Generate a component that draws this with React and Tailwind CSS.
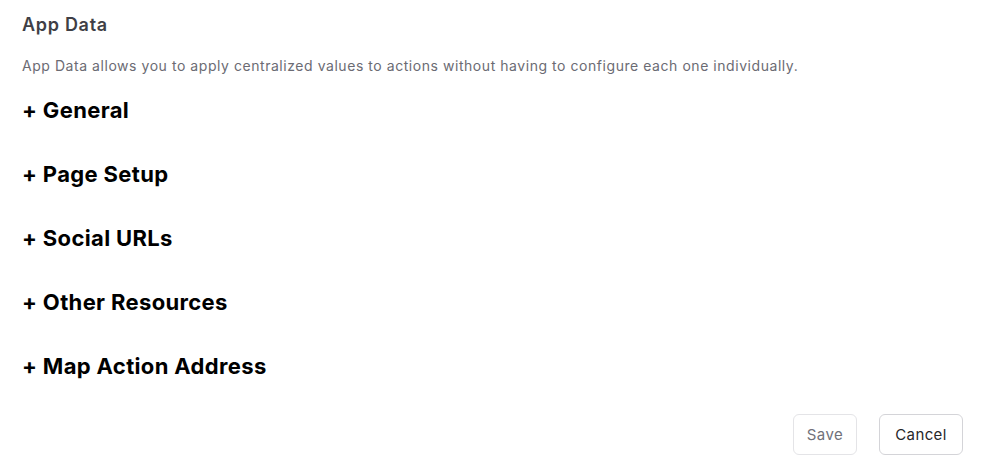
export default function App() {
  const sections = ["General", "Page Setup", "Social URLs", "Other Resources", "Map Action Address"];
  return (
    <div className="w-[987px] h-[461px] bg-white px-[22px] pt-[13px] flex flex-col" style={{ fontFamily: "Inter, 'Noto Sans', sans-serif" }}>
      <h2 className="text-[18px] leading-[24px] font-semibold tracking-[0.7px] text-[#3f3f46]">App Data</h2>
      <p className="mt-[19px] text-[14px] leading-[20px] tracking-[0.55px] text-[#6b6b73]">App Data allows you to apply centralized values to actions without having to configure each one individually.</p>
      <div className="mt-[18px] flex flex-col gap-[32px]">
        {sections.map((s) => (
          <div key={s} className="text-[22px] leading-[32px] font-bold tracking-[0.35px] text-black">+ {s}</div>
        ))}
      </div>
      <div className="mt-auto mb-[6px] flex justify-end gap-[22px] pr-[2px]">
        <button className="h-[41px] w-[64px] rounded-[6px] border border-[#e4e4e7] pt-[2px] text-[15px] tracking-[0.4px] text-[#71717a]">Save</button>
        <button className="h-[41px] w-[84px] rounded-[6px] border border-[#d4d4d8] pt-[2px] text-[15px] tracking-[0.4px] text-[#27272a]">Cancel</button>
      </div>
    </div>
  );
}
